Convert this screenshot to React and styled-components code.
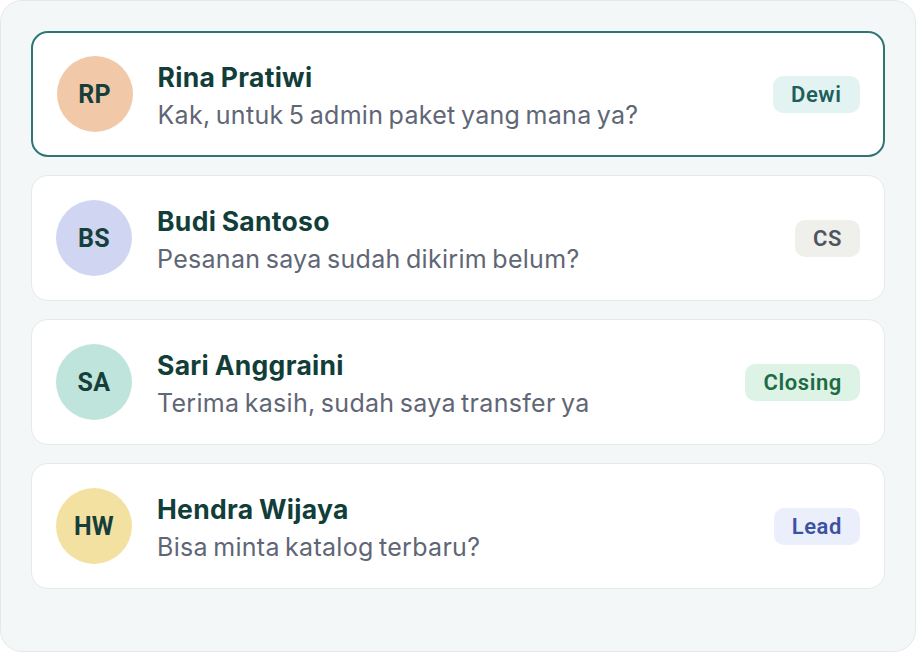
import React from "react";
import styled, { createGlobalStyle } from "styled-components";

const Global = createGlobalStyle`
  html, body { margin: 0; padding: 0; background: #ffffff; }
  * { box-sizing: border-box; }
`;

const Panel = styled.div`
  width: 916px;
  height: 652px;
  background: #f3f7f7;
  border: 1px solid #e3e9e9;
  border-radius: 22px;
  padding: 30px 30px 62px 30px;
  display: flex;
  flex-direction: column;
  gap: 18px;
  font-family: Inter, "Noto Sans", sans-serif;
`;

const Card = styled.div`
  height: 126px;
  background: #ffffff;
  border: ${(p) => (p.$active ? "2px solid #2f7575" : "1.5px solid #e4eaea")};
  border-radius: 17px;
  display: flex;
  align-items: center;
  padding: 0 ${(p) => (p.$active ? "23.5px" : "24px")};
  gap: 25px;
`;

const Avatar = styled.div`
  width: 76px;
  height: 76px;
  border-radius: 50%;
  background: ${(p) => p.$bg};
  display: flex;
  align-items: center;
  justify-content: center;
  flex-shrink: 0;
  color: #163f3b;
  font-family: Roboto, "Liberation Sans", sans-serif;
  font-weight: 700;
  font-size: 25px;
  letter-spacing: 0.3px;
`;

const Body = styled.div`
  flex: 1;
  display: flex;
  flex-direction: column;
  gap: 6px;
  min-width: 0;
  padding-top: 3px;
`;

const Name = styled.div`
  font-size: 26.5px;
  font-weight: 700;
  color: #123e3a;
  letter-spacing: 0.3px;
  word-spacing: -1px;
  line-height: 32px;
`;

const Message = styled.div`
  font-size: 25px;
  font-weight: 400;
  color: #5f6675;
  letter-spacing: 0.3px;
  word-spacing: -2px;
  line-height: 32px;
`;

const Badge = styled.div`
  height: 37px;
  padding: 0 18px;
  border-radius: 10px;
  display: flex;
  align-items: center;
  background: ${(p) => p.$bg};
  color: ${(p) => p.$fg};
  font-family: Roboto, "Liberation Sans", sans-serif;
  font-weight: 600;
  font-size: 22px;
  letter-spacing: 0.6px;
  flex-shrink: 0;
`;

const rows = [
  {
    initials: "RP",
    name: "Rina Pratiwi",
    msg: "Kak, untuk 5 admin paket yang mana ya?",
    avatar: "#f1c9a9",
    badge: "Dewi",
    bbg: "#e2f3f2",
    bfg: "#1e5e5b",
    active: true,
  },
  {
    initials: "BS",
    name: "Budi Santoso",
    msg: "Pesanan saya sudah dikirim belum?",
    avatar: "#d0d6f1",
    badge: "CS",
    bbg: "#efefeb",
    bfg: "#4f5560",
  },
  {
    initials: "SA",
    name: "Sari Anggraini",
    msg: "Terima kasih, sudah saya transfer ya",
    avatar: "#bfe4dc",
    badge: "Closing",
    bbg: "#ddf3e6",
    bfg: "#1d6a45",
  },
  {
    initials: "HW",
    name: "Hendra Wijaya",
    msg: "Bisa minta katalog terbaru?",
    avatar: "#f3e1a2",
    badge: "Lead",
    bbg: "#ebeefb",
    bfg: "#3b52a1",
  },
];

export default function App() {
  return (
    <>
      <Global />
      <Panel>
        {rows.map((r) => (
          <Card key={r.initials} $active={r.active}>
            <Avatar $bg={r.avatar}>{r.initials}</Avatar>
            <Body>
              <Name>{r.name}</Name>
              <Message>{r.msg}</Message>
            </Body>
            <Badge $bg={r.bbg} $fg={r.bfg}>{r.badge}</Badge>
          </Card>
        ))}
      </Panel>
    </>
  );
}
